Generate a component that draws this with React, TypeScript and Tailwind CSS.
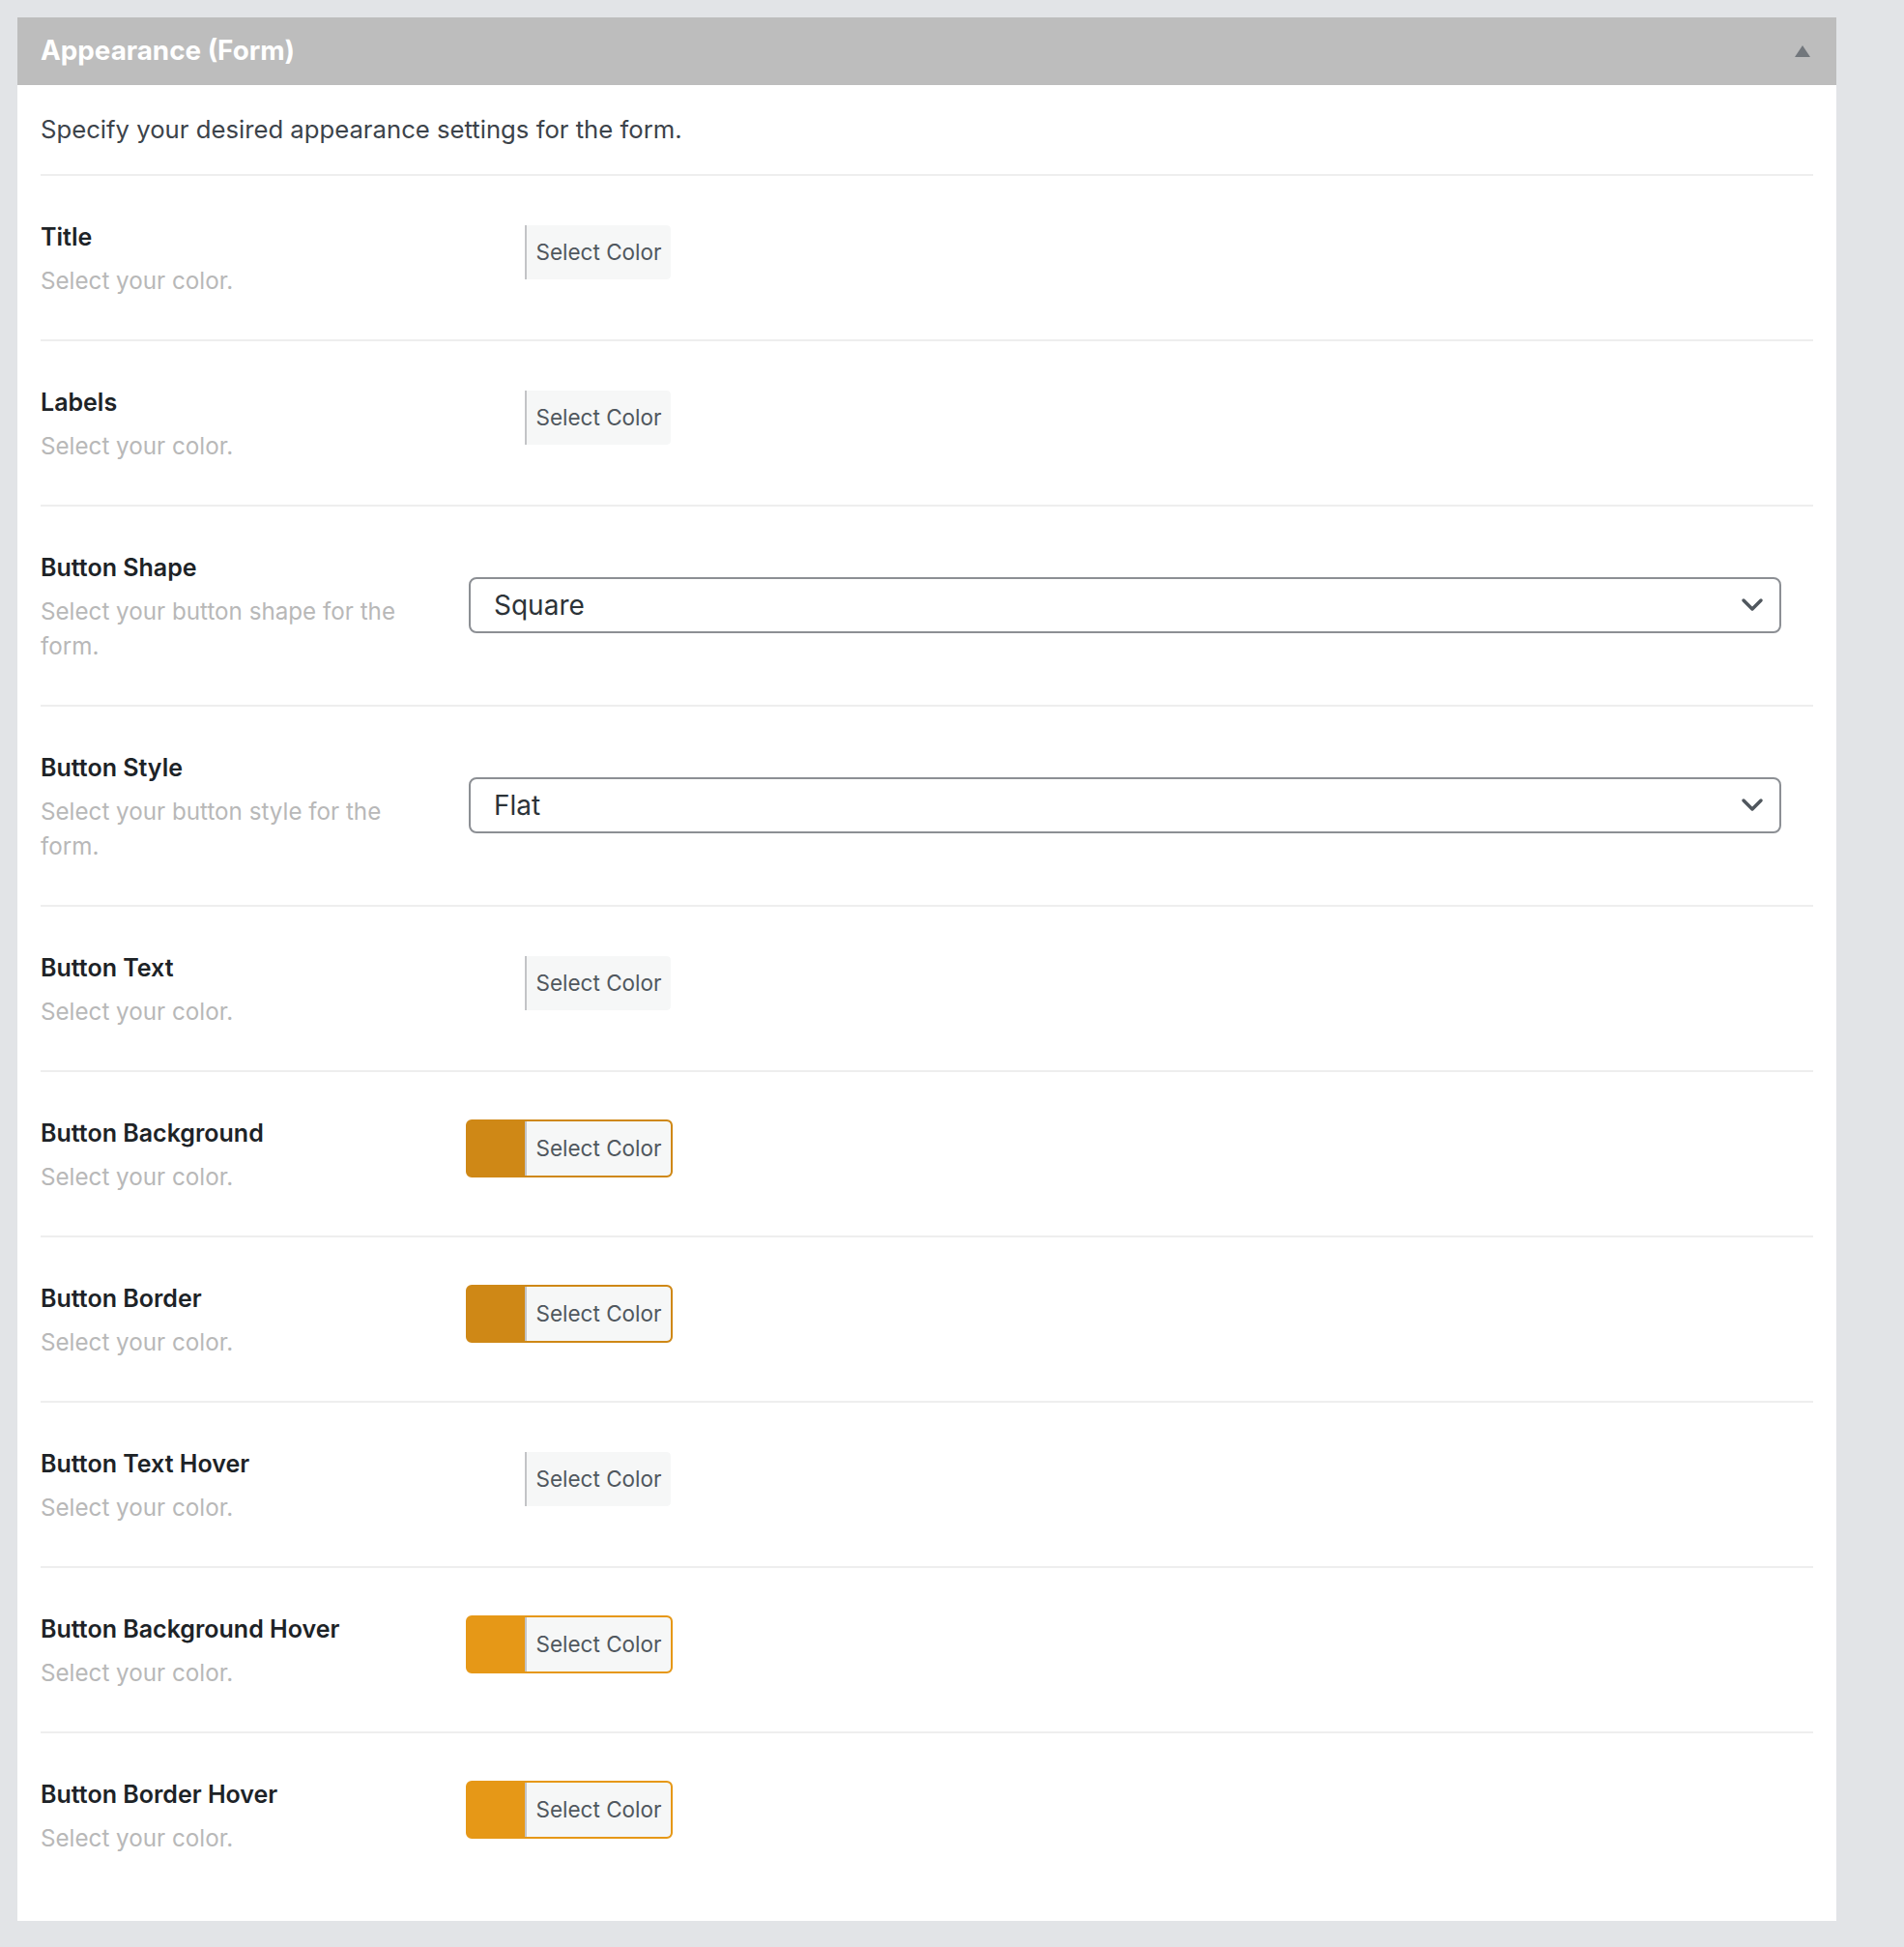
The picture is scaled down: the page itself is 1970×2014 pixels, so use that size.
import React from "react";

type Row =
  | { label: string; desc: string; kind: "color"; color?: string }
  | { label: string; desc: string; kind: "select"; value: string };

const ROWS: Row[] = [
  { label: "Title", desc: "Select your color.", kind: "color" },
  { label: "Labels", desc: "Select your color.", kind: "color" },
  { label: "Button Shape", desc: "Select your button shape for the form.", kind: "select", value: "Square" },
  { label: "Button Style", desc: "Select your button style for the form.", kind: "select", value: "Flat" },
  { label: "Button Text", desc: "Select your color.", kind: "color" },
  { label: "Button Background", desc: "Select your color.", kind: "color", color: "#cf8816" },
  { label: "Button Border", desc: "Select your color.", kind: "color", color: "#cf8816" },
  { label: "Button Text Hover", desc: "Select your color.", kind: "color" },
  { label: "Button Background Hover", desc: "Select your color.", kind: "color", color: "#e69817" },
  { label: "Button Border Hover", desc: "Select your color.", kind: "color", color: "#e69817" },
];

function ColorButton({ color }: { color?: string }) {
  return (
    <button
      type="button"
      className="mt-[3px] flex h-[60px] w-[214px] overflow-hidden rounded-[6px] border-2 border-transparent p-0"
      style={color ? { backgroundColor: color, borderColor: color } : undefined}
    >
      <span className="ml-auto flex h-full w-[151px] items-center justify-center rounded-r-[4px] border-l-2 border-[#c3c4c7] bg-[#f6f7f7] text-[22.5px] text-[#50575e]">
        Select Color
      </span>
    </button>
  );
}

function SelectBox({ value }: { value: string }) {
  return (
    <div className="ml-[3px] mt-[27px] flex h-[58px] items-center justify-between rounded-[8px] border-2 border-[#8c8f94] bg-white pl-[24px] pr-[16px] text-[28px] text-[#2c3338]">
      <span>{value}</span>
      <svg width="24" height="16" viewBox="0 0 24 16" fill="none">
        <path d="M3 3l9 9 9-9" stroke="#50575e" strokeWidth="3.5" strokeLinecap="round" strokeLinejoin="round" />
      </svg>
    </div>
  );
}

export default function App() {
  return (
    <div
      className="min-h-[2014px] bg-[#e2e4e7] pl-[18px] pt-[18px]"
      style={{ fontFamily: "Inter, 'Liberation Sans', sans-serif" }}
    >
      <div className="w-[1882px] bg-white">
        <div className="flex h-[70px] items-center justify-between bg-[#bdbdbd] pl-[24px] pr-[27px]">
          <h2 className="text-[27.8px] font-bold text-white">Appearance (Form)</h2>
          <svg width="16" height="12" viewBox="0 0 16 12">
            <path d="M8 0L16 12H0z" fill="#72777c" />
          </svg>
        </div>

        <div className="px-[24px] pb-[25px]">
          <p className="border-b-2 border-[#eeeeee] pb-[28px] pt-[28px] text-[25.7px] leading-[36px] text-[#3c434a]">
            Specify your desired appearance settings for the form.
          </p>

          {ROWS.map((row, i) => (
            <div
              key={row.label}
              className={`flex pb-[42px] pt-[46px] ${i < ROWS.length - 1 ? "border-b-2 border-[#eeeeee]" : ""}`}
            >
              <div className="w-[440px] shrink-0 pr-[20px]">
                <div className="text-[25px] font-semibold leading-[34px] text-[#1d2327]">{row.label}</div>
                <div className="mt-[11px] w-[380px] text-[24.2px] leading-[36px] text-[#b8b8b8]">{row.desc}</div>
              </div>
              <div className="flex-1 pr-[33px]">
                {row.kind === "color" ? <ColorButton color={row.color} /> : <SelectBox value={row.value} />}
              </div>
            </div>
          ))}
        </div>
      </div>
    </div>
  );
}
